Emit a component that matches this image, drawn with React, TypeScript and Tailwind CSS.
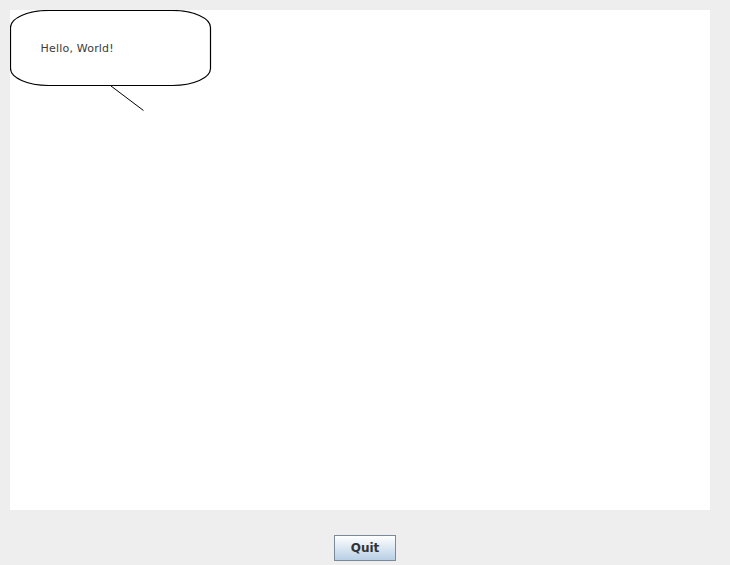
export default function App() {
  return (
    <div className="w-[730px] h-[565px] bg-[#eeeeee] flex flex-col overflow-hidden">
      <div className="relative ml-[10px] mt-[10px] w-[700px] h-[500px] bg-white">
        <svg
          className="absolute left-0 top-0"
          width="212"
          height="110"
          viewBox="0 0 212 110"
        >
          <rect
            x="0.5"
            y="0.5"
            width="200"
            height="75"
            rx="38"
            ry="17"
            fill="white"
            stroke="black"
            strokeWidth="1.2"
          />
          <line x1="101" y1="76" x2="133.5" y2="100.5" stroke="black" strokeWidth="1" />
          <text
            x="30.5"
            y="41.5"
            fontSize="11"
            fill="#3a3a3a"
            style={{ fontFamily: '"DejaVu Sans", sans-serif', letterSpacing: "0.2px" }}
          >
            Hello, World!
          </text>
        </svg>
      </div>
      <div className="flex justify-center mt-[25px]">
        <button
          className="w-[62px] h-[26px] border border-[#7a8a99] bg-gradient-to-b from-white to-[#b8cfe5] text-[12px] font-bold text-[#333333] leading-none"
          style={{ fontFamily: '"DejaVu Sans", sans-serif' }}
        >
          Quit
        </button>
      </div>
    </div>
  );
}
